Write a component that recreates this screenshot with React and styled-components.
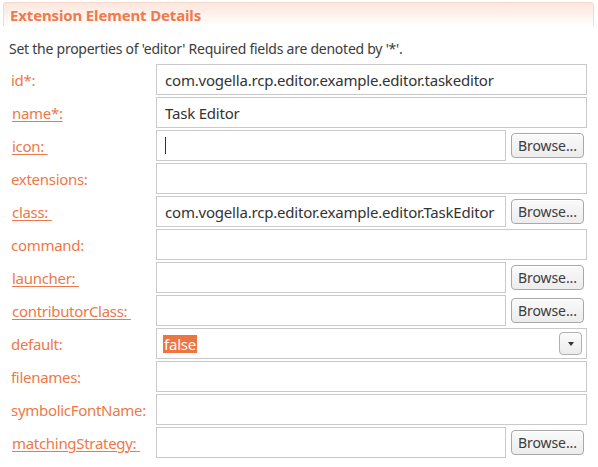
import React from "react";
import styled, { createGlobalStyle } from "styled-components";

const Global = createGlobalStyle`
  html, body { margin: 0; padding: 0; background: #ffffff; }
  body { font-family: "Noto Sans", "Open Sans", sans-serif; }
`;

const Page = styled.div`
  width: 598px;
  height: 467px;
  box-sizing: border-box;
  padding: 2px 4px 0 3px;
  background: #fff;
  overflow: hidden;
`;

const Header = styled.div`
  height: 24px;
  border: 1px solid #f3d9cb;
  border-bottom: none;
  border-radius: 4px 4px 0 0;
  background: linear-gradient(#fde6dc, #fff5f0 60%, #ffffff);
  display: flex;
  align-items: center;
  padding-left: 6px;
  box-sizing: border-box;
`;

const Title = styled.span`
  color: #ef7a4d;
  font-weight: 700;
  font-size: 15px;
  letter-spacing: -0.15px;
`;

const Description = styled.div`
  margin: 13px 0 0 6px;
  font-size: 14px;
  color: #3c3c3c;
  height: 20px;
  line-height: 20px;
  letter-spacing: -0.25px;
`;

const Form = styled.div`
  margin-top: 5px;
  display: grid;
  grid-template-columns: 153px 1fr auto;
  grid-auto-rows: 31px;
  row-gap: 2px;
  padding-right: 7px;
`;

const Label = styled.span`
  grid-column: 1;
  align-self: center;
  padding-left: ${(p) => (p.$link ? 9 : 8)}px;
  font-size: 15px;
  color: #ee7848;
  letter-spacing: -0.3px;
  text-decoration: ${(p) => (p.$link ? "underline" : "none")};
  text-underline-offset: 2px;
  text-decoration-thickness: 1px;
  white-space: pre;
`;

const Field = styled.div`
  grid-column: ${(p) => (p.$wide ? "2 / span 2" : "2")};
  border: 1px solid #cacaca;
  background: #fff;
  display: flex;
  align-items: center;
  padding-left: 8px;
  font-size: 15px;
  color: #333;
  letter-spacing: -0.2px;
  position: relative;
  box-sizing: border-box;
  white-space: nowrap;
  overflow: hidden;
`;

const Caret = styled.span`
  display: inline-block;
  width: 1px;
  height: 17px;
  background: #333;
`;

const Browse = styled.button`
  grid-column: 3;
  align-self: center;
  margin: 0 3px 0 5px;
  width: 73px;
  height: 25px;
  border: 1px solid #a8a8a8;
  border-radius: 4px;
  background: linear-gradient(#fafafa, #ececec);
  font-family: inherit;
  font-size: 14px;
  color: #3c3c3c;
  letter-spacing: -0.1px;
  padding: 0;
  box-shadow: inset 0 1px 0 #fff;
`;

const Selected = styled.span`
  background: #ee7442;
  color: #fff;
  padding: 0 1px;
  margin-left: -2px;
  line-height: 18px;
`;

const DropButton = styled.span`
  position: absolute;
  right: 4px;
  top: 3px;
  width: 23px;
  height: 23px;
  box-sizing: border-box;
  border: 1px solid #b0b0b0;
  border-radius: 4px;
  background: linear-gradient(#fbfbfb, #ececec);
  display: flex;
  align-items: center;
  justify-content: center;
`;

const Arrow = styled.span`
  width: 0;
  height: 0;
  border-left: 3px solid transparent;
  border-right: 3px solid transparent;
  border-top: 4px solid #333;
`;

const rows = [
  { label: "id*:", value: "com.vogella.rcp.editor.example.editor.taskeditor" },
  { label: "name*:", link: true, value: "Task Editor" },
  { label: "icon: ", link: true, caret: true, browse: true },
  { label: "extensions:" },
  { label: "class: ", link: true, value: "com.vogella.rcp.editor.example.editor.TaskEditor", browse: true },
  { label: "command:" },
  { label: "launcher: ", link: true, browse: true },
  { label: "contributorClass: ", link: true, browse: true },
  { label: "default:", combo: "false" },
  { label: "filenames:" },
  { label: "symbolicFontName:" },
  { label: "matchingStrategy: ", link: true, browse: true },
];

export default function App() {
  return (
    <Page>
      <Global />
      <Header>
        <Title>Extension Element Details</Title>
      </Header>
      <Description>
        Set the properties of 'editor' Required fields are denoted by '*'.
      </Description>
      <Form>
        {rows.map((r) => (
          <React.Fragment key={r.label}>
            <Label $link={r.link}>{r.label}</Label>
            <Field $wide={!r.browse}>
              {r.value}
              {r.caret && <Caret />}
              {r.combo && (
                <>
                  <Selected>{r.combo}</Selected>
                  <DropButton>
                    <Arrow />
                  </DropButton>
                </>
              )}
            </Field>
            {r.browse && <Browse>Browse...</Browse>}
          </React.Fragment>
        ))}
      </Form>
    </Page>
  );
}
